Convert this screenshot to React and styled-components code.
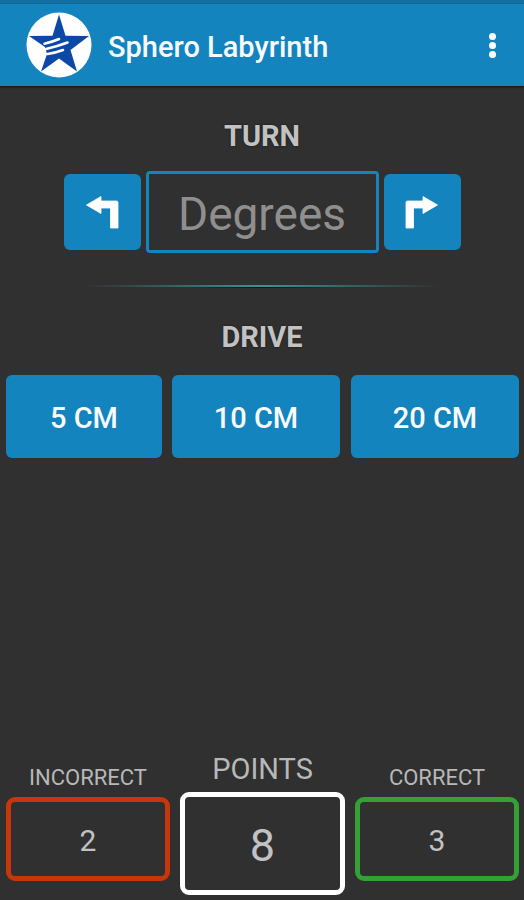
import React, { useState } from "react";
import styled, { createGlobalStyle } from "styled-components";

const distances = [
  { label: "5 CM", width: 156, gap: 10 },
  { label: "10 CM", width: 168, gap: 11 },
  { label: "20 CM", width: 168, gap: 0 },
];

function App() {
  const [degrees, setDegrees] = useState("");
  return (
    <Screen>
      <GlobalStyle />
      <StatusBar />
      <Header>
        <Logo viewBox="0 0 66 66">
          <circle cx="33" cy="33" r="32.5" fill="#fff" />
          <path
            fill="#0c48a6"
            d="M33 2.5 L39.5 23.7 L63 24 L44.5 38 L51 59.5 L33 46.5 L15 59.5 L21 42 L19 35 L3 24 L26.5 23.7 Z"
          />
          <path
            d="M18.5 31.8 Q26 30 33 27 M20 37 Q31 34.5 41.5 30.5 M21.5 42 Q29 41 37 38"
            stroke="#fff"
            strokeWidth="2.6"
            strokeLinecap="round"
            fill="none"
          />
        </Logo>
        <Title>Sphero Labyrinth</Title>
        <MenuButton aria-label="Menu">
          <Dot />
          <Dot />
          <Dot />
        </MenuButton>
      </Header>
      <TurnTitle>TURN</TurnTitle>
      <TurnRow>
        <TurnButton aria-label="Turn left">
          <TurnIcon />
        </TurnButton>
        <DegreesInput
          placeholder="Degrees"
          value={degrees}
          onChange={(e) => setDegrees(e.target.value)}
        />
        <TurnButton aria-label="Turn right">
          <TurnIcon $flip />
        </TurnButton>
      </TurnRow>
      <Divider />
      <DriveTitle>DRIVE</DriveTitle>
      <DriveRow>
        {distances.map((item) => (
          <DriveButton key={item.label} $width={item.width} $gap={item.gap}>
            {item.label}
          </DriveButton>
        ))}
      </DriveRow>
      <ScoreRow>
        <Score>
          <ScoreLabel>INCORRECT</ScoreLabel>
          <ScoreBox $color="#c8360b">2</ScoreBox>
        </Score>
        <Score $large>
          <ScoreLabel $large>POINTS</ScoreLabel>
          <ScoreBox $large $color="#fff">
            8
          </ScoreBox>
        </Score>
        <Score>
          <ScoreLabel>CORRECT</ScoreLabel>
          <ScoreBox $color="#35a035">3</ScoreBox>
        </Score>
      </ScoreRow>
    </Screen>
  );
}

function TurnIcon({ $flip }) {
  return (
    <Arrow viewBox="0 0 34 34" $flip={$flip}>
      <path
        d="M1.5 10 L16 1.5 V6 H31.5 Q33 6 33 7.5 V33 H25.5 V13 H16 V18.5 Z"
        fill="#fff"
        stroke="#fff"
        strokeWidth="0.8"
        strokeLinejoin="round"
      />
    </Arrow>
  );
}

const GlobalStyle = createGlobalStyle`
  * {
    box-sizing: border-box;
  }
  body {
    margin: 0;
    background-color: #303030;
    font-family: Roboto, sans-serif;
  }
  button, input {
    font-family: inherit;
  }
`;
const Screen = styled.div`
  display: flex;
  flex-direction: column;
  width: 524px;
  height: 900px;
  overflow: hidden;
  background-color: #303030;
`;
const StatusBar = styled.div`
  height: 4px;
  background-color: #126f9f;
`;
const Header = styled.header`
  display: flex;
  align-items: center;
  height: 82px;
  padding: 0 22px 0 26px;
  background-color: #1484bf;
  box-shadow: 0 1px 2px #111;
`;
const Logo = styled.svg`
  width: 66px;
  height: 66px;
`;
const Title = styled.h1`
  flex: 1;
  margin: 3px 0 0 16px;
  color: #f8fbfd;
  font-size: 29px;
  font-weight: 500;
  line-height: 34px;
`;
const MenuButton = styled.button`
  display: flex;
  flex-direction: column;
  align-items: center;
  gap: 2px;
  width: 20px;
  padding: 0;
  border: none;
  background: none;
`;
const Dot = styled.span`
  width: 7px;
  height: 7px;
  border-radius: 50%;
  background-color: #fff;
`;
const SectionTitle = styled.h2`
  margin: 0;
  color: #c2c2c2;
  font-size: 29px;
  font-weight: 700;
  line-height: 34px;
  text-align: center;
  text-shadow: 0 0 2px #111;
`;
const TurnTitle = styled(SectionTitle)`
  margin-top: 33px;
`;
const DriveTitle = styled(SectionTitle)`
  margin-top: 32px;
`;
const TurnRow = styled.div`
  display: flex;
  justify-content: center;
  align-items: center;
  gap: 5px;
  margin-top: 18px;
`;
const TurnButton = styled.button`
  display: flex;
  justify-content: center;
  align-items: center;
  width: 77px;
  height: 76px;
  padding: 0;
  border: none;
  border-radius: 6px;
  background-color: #1484bf;
`;
const Arrow = styled.svg`
  width: 34px;
  height: 34px;
  transform: ${(props) => (props.$flip ? "scaleX(-1)" : "none")};
`;
const DegreesInput = styled.input`
  width: 233px;
  height: 82px;
  padding: 4px 0 0;
  border: 3px solid #1484bf;
  border-radius: 4px;
  outline: none;
  background: none;
  color: #c2c2c2;
  font-size: 46px;
  text-align: center;
  &::placeholder {
    color: #8f8f8f;
    opacity: 1;
  }
`;
const Divider = styled.div`
  height: 3px;
  margin: 32px 84px 0;
  background:
    linear-gradient(to right, transparent, #3d9299 50%, transparent) top / 100% 2px no-repeat,
    linear-gradient(to right, transparent 30%, #0c0c0c 50%, transparent 70%) bottom / 100% 1px no-repeat;
`;
const DriveRow = styled.div`
  display: flex;
  margin-top: 21px;
  padding-left: 6px;
`;
const DriveButton = styled.button`
  width: ${(props) => props.$width}px;
  height: 83px;
  margin-right: ${(props) => props.$gap}px;
  padding: 2px 0 0;
  border: none;
  border-radius: 6px;
  background-color: #1484bf;
  color: #f8fbfd;
  font-size: 29px;
  font-weight: 500;
`;
const ScoreRow = styled.div`
  display: flex;
  justify-content: space-between;
  align-items: flex-end;
  margin-top: auto;
  padding: 0 5px 5px 6px;
`;
const Score = styled.div`
  display: flex;
  flex-direction: column;
  align-items: center;
  width: ${(props) => (props.$large ? 165 : 164)}px;
  margin-bottom: ${(props) => (props.$large ? 0 : 14)}px;
`;
const ScoreLabel = styled.div`
  margin-bottom: ${(props) => (props.$large ? 6 : 5)}px;
  color: #b8b8b8;
  font-size: ${(props) => (props.$large ? 29 : 22)}px;
  line-height: ${(props) => (props.$large ? 34 : 28)}px;
`;
const ScoreBox = styled.div`
  display: flex;
  justify-content: center;
  align-items: center;
  width: 100%;
  height: ${(props) => (props.$large ? 103 : 84)}px;
  padding-top: ${(props) => (props.$large ? 4 : 2)}px;
  border: 5px solid ${(props) => props.$color};
  border-radius: 9px;
  color: #c2c2c2;
  font-size: ${(props) => (props.$large ? 45 : 30)}px;
`;
export default App;
